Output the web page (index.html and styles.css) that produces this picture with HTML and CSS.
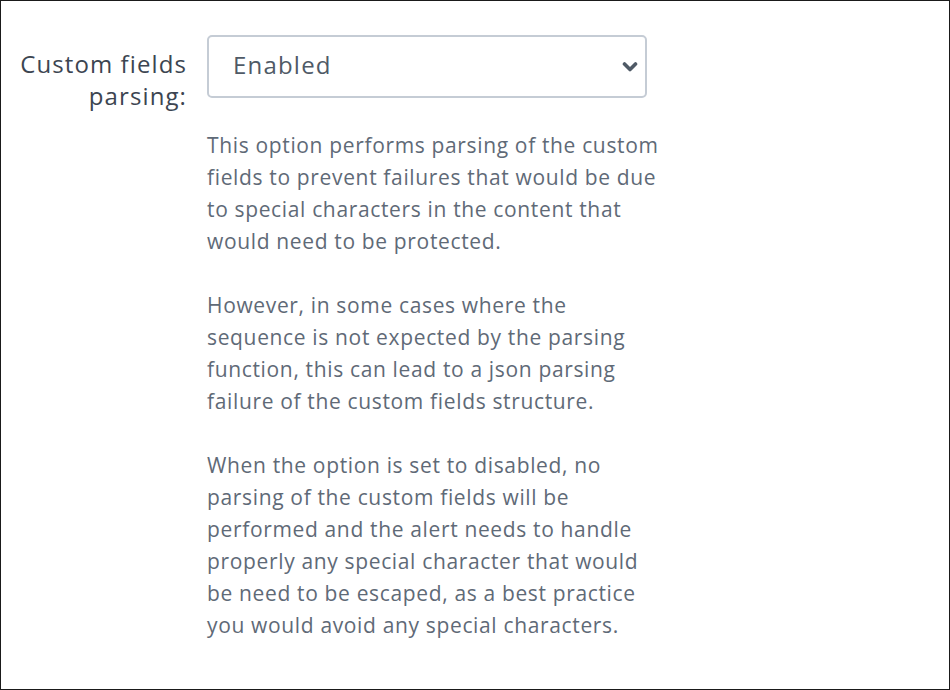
FILE: index.html
```html
<!DOCTYPE html>
<html>
<head>
<meta charset="utf-8">
<link rel="stylesheet" href="styles.css">
</head>
<body>
<div class="frame">
  <div class="field">
    <label class="label" for="cfp">Custom fields parsing:</label>
    <div class="control">
      <div class="select">
        <span class="value">Enabled</span>
        <svg class="chev" width="16" height="12" viewBox="0 0 16 12"><path d="M2.5 3 L8 8.5 L13.5 3" fill="none" stroke="#4f5a66" stroke-width="3.6" stroke-linecap="round" stroke-linejoin="round"/></svg>
      </div>
      <div class="help">
        <p>This option performs parsing of the custom fields to prevent failures that would be due to special characters in the content that would need to be protected.</p>
        <p>However, in some cases where the sequence is not expected by the parsing function, this can lead to a json parsing failure of the custom fields structure.</p>
        <p>When the option is set to disabled, no parsing of the custom fields will be performed and the alert needs to handle properly any special character that would be need to be escaped, as a best practice you would avoid any special characters.</p>
      </div>
    </div>
  </div>
</div>
</body>
</html>
```
FILE: styles.css
```css
html, body {
  margin: 0;
  padding: 0;
  background: #fff;
}
.frame {
  box-sizing: border-box;
  width: 950px;
  height: 690px;
  border: 1px solid #1a1a1a;
  font-family: "Open Sans", "Liberation Sans", sans-serif;
  font-size: 21px;
  line-height: 32px;
}
.field {
  display: flex;
  gap: 20px;
  padding-top: 34px;
}
.label {
  width: 186px;
  text-align: right;
  color: #3c4551;
  font-size: 24px;
  letter-spacing: 1.1px;
  padding-top: 13px;
}
.control {
  width: 440px;
}
.select {
  box-sizing: border-box;
  height: 63px;
  border: 2px solid #c5ccd5;
  border-radius: 5px;
  display: flex;
  align-items: center;
  justify-content: space-between;
  padding: 0 7px 3px 24px;
}
.chev {
  margin-top: 3px;
}
.value {
  color: #4f5a66;
  font-size: 24px;
  letter-spacing: 1.2px;
}
.help {
  color: #5f6a77;
  margin-top: 31px;
  width: 460px;
  letter-spacing: 0.65px;
}
.help p {
  margin: 0 0 32px 0;
}
```
